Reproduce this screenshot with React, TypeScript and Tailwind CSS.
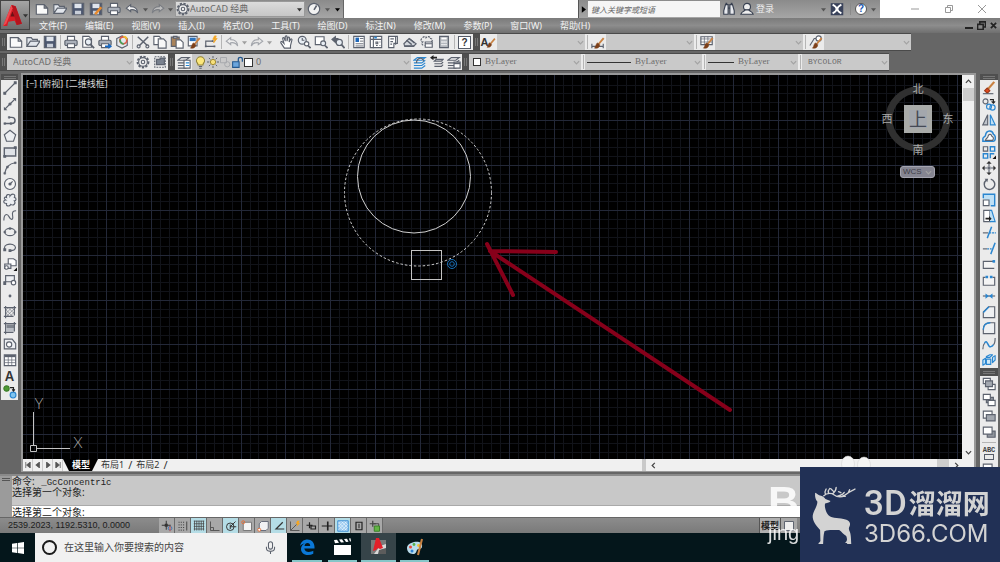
import React from 'react';

interface Tool {
  label: string;
  icon: React.ReactNode;
}

const INK = '#5c626e';
const BLUE = '#2a86d0';

const Icon = ({ children, className = 'size-[14px]' }: { children: React.ReactNode; className?: string }) => (
  <svg viewBox="0 0 16 16" className={`shrink-0 ${className}`} fill="none" stroke={INK} strokeWidth="1.3">
    {children}
  </svg>
);

/* ---------- shared glyphs ---------- */

const newFile = <path d="M1.500 3h9l4 4v7h-13zM10.500 3v4h4" fill="#fafafa" />;
const openFile = <path d="M1 13V3h5l1.500 2H13v2M1 13l4-6h11l-4 6z" fill="#e2e6ec" />;
const saveFile = (
  <>
    <path d="M1.500 1.500h13v13h-13z" fill="#4d5870" />
    <path d="M4 2h8v5H4z" fill="#dfe4ec" stroke="none" />
    <path d="M4.500 10h7v4h-7z" fill="#c8ced8" stroke="none" />
  </>
);
const printer = (
  <>
    <path d="M4 6V1.500h8V6" fill="#fff" />
    <rect x="1" y="6" width="14" height="6" rx="1.500" fill="#aab0ba" />
    <path d="M4 10h8v4.500H4z" fill="#fff" />
  </>
);
const undo = <path d="M6.500 3 1.500 7l5 4V8.800c4-.5 6.500.7 8 3.700 0-4.500-3-7.200-8-7.200z" fill="#f2f2f2" />;
const redo = <path d="m9.500 3 5 4-5 4V8.800c-4-.5-6.500.7-8 3.700 0-4.500 3-7.200 8-7.200z" fill="#e4e4e4" />;
const gear = (
  <>
    <circle cx="8" cy="8" r="6.300" strokeDasharray="2.600 1.600" strokeWidth="2" />
    <circle cx="8" cy="8" r="5" fill="#eee" />
    <circle cx="8" cy="8" r="2" />
  </>
);
const brush = (
  <>
    <path d="m9 10 5.500-6.500" stroke="#c98242" strokeWidth="2.200" />
    <path d="M4 15c3 .5 6-.5 6-4L8 9c-2.500 0-2 4-4 6z" fill="#7d4019" stroke="#7d4019" strokeWidth=".6" />
  </>
);
const layers = <path d="m1 6 4-3h9l-4 3zM1 9h9l4-3M1 12h9l4-3M1 15h9l4-3" fill="#f4f4f4" />;

/* ---------- toolbars ---------- */

const standardTools: Tool[][] = [
  [
    { label: '新建', icon: newFile },
    { label: '打开', icon: openFile },
    { label: '保存', icon: saveFile },
  ],
  [
    { label: '打印', icon: printer },
    { label: '打印预览', icon: <><path d="M2 1.500h7l3 3V14H2z" fill="#fff" /><circle cx="8.500" cy="8" r="3.500" fill="#e8eef5" /><path d="m11 11 4 4" strokeWidth="2" /></> },
    { label: '发布', icon: <>{printer}<path d="M8 12h4V9.500l4 3.500-4 3v-2H8z" fill="#1668c4" stroke="none" /></> },
    { label: '三维打印', icon: <><path d="m8 1 6 3v8l-6 3-6-3V4z" fill="#e3e8ee" /><circle cx="9.500" cy="6" r="4" stroke="#dd5b49" strokeWidth="2" /><path d="M6 5a4 4 0 0 0 4 5" stroke="#42a35a" strokeWidth="2" /><path d="M9.500 2a4 4 0 0 1 4 3" stroke="#f0c030" strokeWidth="2" /></> },
  ],
  [
    { label: '剪切', icon: <><path d="m2 2 11 10M14 2 4 12" strokeWidth="1.700" /><circle cx="3" cy="13" r="1.700" /><circle cx="13" cy="13" r="1.700" /></> },
    { label: '复制', icon: <><path d="M1 1.500h6l2 2V11H1z" fill="#fff" /><path d="M6 4.500h6l3 3V15H6z" fill="#f7f7f7" /></> },
    { label: '粘贴', icon: <><path d="M1.500 2.500h9V13h-9z" fill="#a9835a" /><path d="M4 1.500h4v2H4z" fill="#ddd" /><path d="M7 5.500h5l3 3V15H7z" fill="#fff" /></> },
    { label: '特性匹配', icon: <><path d="M1.500 1.500h10v11h-10z" fill="#fff" /><path d="M3 3h7v4H3z" fill="#2c72bc" stroke="none" />{brush}</> },
    { label: '块编辑器', icon: <><path d="M2 13V7h8M2 13h10" /><path d="M1 12h2v2H1zM9 6h2v2H9zM11 12h2v2h-2z" fill={INK} stroke="none" /><path d="m12 1-2 4h2l-1 4 4-5h-2l1-3z" fill="#f5a623" stroke="#f5a623" strokeWidth=".8" /></> },
  ],
];

const viewTools: Tool[][] = [
  [
    { label: '平移', icon: <path d="M5 15 1 9c-.5-1.500 1-2 2-1l1.500 1.500L3 4c0-1 1.500-1.500 2 0l1 3V2c0-1.300 2-1.300 2 0v5l1-4c.3-1 2-.8 1.800.4L10.500 8l1.500-3c.5-1 2-.4 1.600.8L12 12v3z" fill="#fff" /> },
    { label: '实时缩放', icon: <><circle cx="6" cy="6" r="4.500" fill="#e8eef4" /><path d="M6 3.500V6h2.500" /><circle cx="11" cy="10" r="2.500" fill="#fff" /><path d="m12.500 12 3 3" strokeWidth="2" /></> },
    { label: '窗口缩放', icon: <><path d="M1.500 2h10v9h-10z" fill="#fff" /><circle cx="10.500" cy="9.500" r="2.800" fill="#e8eef4" /><path d="m12.500 12 3 3" strokeWidth="2" /></> },
    { label: '缩放上一个', icon: <><path d="M1 5 5 2v2h3v3H5v1.500z" fill={INK} /><circle cx="9.500" cy="8.500" r="3.500" fill="#e8eef4" /><path d="m12 11 3.500 4" strokeWidth="2" /></> },
  ],
  [
    { label: '特性', icon: <><path d="M2 1.500h12v13H2z" fill="#fff" /><path d="M4 3h4v5H4z" fill="#1f67b8" stroke="none" /><path d="M9 4h4M9 7h4M4 10h9M4 12.500h9" strokeWidth="1" /></> },
    { label: '设计中心', icon: <><path d="M1.500 1.500h13v13h-13z" fill="#fff" /><path d="M5 2v13M2 5h12M8 8h2v2H8zM12 8h1M8 12h2M12 12h1" /><path d="M6 2h3v2H6z" fill={BLUE} stroke="none" /></> },
    { label: '工具选项板', icon: <><path d="M3 1.500h10v8H9v5H3z" fill="#fff" /><path d="M11 2v9M5 4.500h4M5 7.500h3M5 10.500h2" /></> },
    { label: '图纸集', icon: <><path d="m1 10 6-6 8 6-3 3H2z" fill="#d5d9de" /><path d="m4 6 6 5M7 4l6 5M2 12.500h11" strokeWidth="1.500" /></> },
    { label: '标记集', icon: <><path d="M3 3c2-2 4-1 4 0 2-2 5-1 5 1 2 0 3 2 1 4M2 4c-2 2 0 4 1 4-2 2 0 4 2 4" strokeDasharray="2.500 1" /><path d="M6 8h8v6H6zM6 10h8" fill="#fff" /></> },
    { label: '计算器', icon: <><path d="M3 1.500h10v13H3z" fill="#b4b8be" /><path d="M5 4h6" stroke="#fff" strokeWidth="2" /><path d="M5 8h6M5 11h6" stroke="#fff" strokeDasharray="1.500 .8" strokeWidth="1.600" /></> },
  ],
];

const drawTools: Tool[] = [
  { label: '直线', icon: <><path d="M2 14 14 2" /><path d="M1 13h2v2H1zM13 1h2v2h-2z" fill={INK} /></> },
  { label: '构造线', icon: <><path d="M2 14 14 2" /><path d="M1 11v4h4zM11 1h4v4z" fill={INK} stroke="none" /><circle cx="8" cy="8" r="1.200" fill={INK} /></> },
  { label: '多段线', icon: <><path d="M2 12h8c5 0 5-7 0-7H8" strokeWidth="1.700" /><path d="M1 11h2v2H1zM8 11h2v2H8zM6 4h2v2H6z" fill={INK} strokeWidth=".5" /></> },
  { label: '多边形', icon: <path d="m8 1.500 6.500 5L12 14H4L1.500 6.500z" fill="#eceef1" /> },
  { label: '矩形', icon: <><path d="M1.500 3.500h13v9h-13z" fill="#dfe2e7" strokeWidth="1.600" /><path d="M13 2h2v2h-2zM1 12h2v2H1z" fill={INK} /></> },
  { label: '圆弧', icon: <><path d="M2 14C3 8 7 3 14 2" /><path d="M1 13h2v2H1zM4 6h2v2H4zM13 1h2v2h-2z" fill={INK} strokeWidth=".6" /></> },
  { label: '圆', icon: <><circle cx="8" cy="8" r="6.300" fill="#f3f3f3" /><path d="m8 8 3-3" /><circle cx="8" cy="8" r="1.200" fill={INK} /></> },
  { label: '修订云线', icon: <path d="M4 5c-1-4 4-4 4-1.500C10 0 15 1 13 5c3 1 2 4 0 4 2 3-1 6-4 4-2 3-6 2-5-1-4 0-4-4-1-4-3-2-1-4 1-3z" fill="#eceef1" /> },
  { label: '样条曲线', icon: <path d="M1 13C1 5 5 5 7 9s5 4 4-1 1-6 4-6" /> },
  { label: '椭圆', icon: <><ellipse cx="8" cy="8" rx="6" ry="4.200" fill="#eee" /><path d="M1 7h2v2H1zM7 3h2v2H7zM13 7h2v2h-2z" fill={INK} strokeWidth=".5" /></> },
  { label: '椭圆弧', icon: <><path d="M2 10C0 4 7 3 11 4c5 2 4 7-2 7" /><path d="M1 9h2v2H1zM7 10h2v2H7z" fill={INK} /></> },
  { label: '插入块', icon: <><path d="M6 2h6l3 2v6H6z" fill="#fff" /><path d="M2 8h7v5H2z" fill="#dfe2e7" /><circle cx="4" cy="12" r="2" fill="#fff" /><path d="m16 12v4h-4z" fill="#111" stroke="none" /></> },
  { label: '创建块', icon: <><path d="M3 3h10v7H3z" fill="#eceef1" /><circle cx="12" cy="11" r="2.500" fill="#fff" /><path d="M1 10h2v3H1z" fill={INK} /></> },
  { label: '点', icon: <circle cx="8" cy="8" r="1" fill={INK} /> },
  { label: '图案填充', icon: <><path d="M3 1v14M1 3h14M13 1v11M1 13h11" /><path d="M3 6l3-3M3 10l7-7M4 13l9-9M8 13l5-5M3 9l4 4M3 5l8 8M6 3l7 7M10 3l3 3" strokeWidth=".6" /></> },
  { label: '渐变色', icon: <><path d="M4 4h9v4H4z" fill="#80858e" stroke="none" /><path d="M4 8h9v4H4z" fill="#b9bdc4" stroke="none" /><path d="M3 1v14M1 3h14M13 1v11M1 13h11" /></> },
  { label: '面域', icon: <><path d="M1.500 2.500h9l4 5v6h-13z" fill="#eceef1" /><circle cx="7" cy="8.500" r="3" fill="#fff" /></> },
  { label: '表格', icon: <><path d="M1.500 2h13v12.500h-13z" fill="#fff" /><path d="M2 3.500h12" strokeWidth="2.500" /><path d="M2 8h12M2 11h12M6 4v10M10 4v10" strokeWidth=".8" /></> },
  { label: '多行文字', icon: null },
  { label: '添加选定对象', icon: <><circle cx="4" cy="4" r="3" fill="#4e9a34" stroke="#3c7d28" /><circle cx="11.500" cy="11.500" r="3.300" fill="#7fc4f0" stroke="#2a86d0" /><path d="M8 3h4v3M10.500 5l1.500 2 1.500-2" stroke="#222" /></> },
];

const modifyTools: Tool[] = [
  { label: '删除', icon: <><path d="m7 9 7-8" stroke="#c98242" strokeWidth="2.600" /><path d="m3 11 3-3 3 3-3 3z" fill="#e2481c" stroke="#9c3a1a" /><path d="M1 14.500h12" /></> },
  { label: '复制对象', icon: <><circle cx="4" cy="5" r="2.800" /><circle cx="8" cy="11" r="2.800" stroke={BLUE} /><circle cx="12" cy="12" r="3" stroke={BLUE} /><path d="M9 3h4v3M11 5l2 2 2-2" stroke="#222" /></> },
  { label: '镜像', icon: <><path d="M6.500 2v11.500H1z" fill="#c0c5cc" /><path d="M9.500 2v11.500H15z" fill="#bfe0f5" stroke={BLUE} /></> },
  { label: '偏移', icon: <><path d="M1 14v-3c0-2 3-2 3-4 1-6 8-6 9-1 3 1 3 8 0 8z" stroke={BLUE} strokeWidth="1.700" /><path d="M4 13c0-3 3-2 3-5 1-3 4-2 4 0 2 1 3 3 1 5z" fill="#fff" /></> },
  { label: '阵列', icon: <><path d="M1.500 2h5v5h-5z" /><path d="M9.500 2h5v5h-5zM1.500 10h5v5h-5zM9.500 15v-5H14" stroke={BLUE} strokeWidth="1.600" /><path d="m12 16 4-4v4z" fill="#111" stroke="none" /></> },
  { label: '移动', icon: <><path d="M8 1v5M8 10v5M1 8h5M10 8h5" /><path d="m8 0-3 3h6zM8 16l-3-3h6zM0 8l3-3v6zM16 8l-3-3v6z" fill="#333" stroke="none" /><path d="M7 7h2v2H7z" /></> },
  { label: '旋转', icon: <><path d="M5 3.500a6 6 0 1 0 5-1" strokeWidth="1.600" /><path d="m3 2 4 0-1 4z" fill={INK} stroke="none" /></> },
  { label: '缩放', icon: <><path d="M1.500 6V1.500h13v13H10" fill="#bfe0f5" stroke={BLUE} strokeWidth="1.600" /><path d="M1.500 8h6.500v6.500H1.500z" fill="#fff" /></> },
  { label: '拉伸', icon: <><path d="M2 14.500V1.500h7v13z" fill="#fff" /><path d="m9 1.500 2 0 4 13H9" fill="#bfe0f5" stroke={BLUE} /><path d="M4 10h4V8l3 3-3 3v-2H4z" fill="#222" stroke="none" /></> },
  { label: '修剪', icon: <><path d="M1 9h6" /><path d="M8 9h8" stroke={BLUE} strokeDasharray="2.500 1" /><path d="M6 15 11 2" stroke={BLUE} strokeWidth="1.700" /></> },
  { label: '延伸', icon: <><path d="M1 9h5" /><path d="M6 9h5" stroke={BLUE} strokeDasharray="2 1" /><path d="m10 15 5-13" stroke={BLUE} strokeWidth="1.700" /></> },
  { label: '打断于点', icon: <><path d="M14 13H1.500V5H13" fill="#f4f4f4" /><path d="M12 3.500h3v3h-3z" fill={BLUE} stroke="none" /></> },
  { label: '打断', icon: <><path d="M4 5H1.500v9h13V5H12" fill="#f4f4f4" /><path d="M4 3h3v3H4zM9 3h3v3H9z" fill={BLUE} stroke="none" /></> },
  { label: '合并', icon: <><path d="M1 8h14" /><path d="m4 5 4 3-4 3zM12 5 8 8l4 3z" fill={BLUE} stroke="none" /></> },
  { label: '倒角', icon: <><path d="M1.500 14.500V8l6-6h7v12.500z" fill="#eef0f2" /><path d="M1.500 8.500 8 2" stroke={BLUE} strokeWidth="1.600" /></> },
  { label: '圆角', icon: <><path d="M1.500 14.500V9c0-4 3-7 7-7h6v12.500z" fill="#eef0f2" /><path d="M1.500 10c0-5 3-8 8-8" stroke={BLUE} strokeWidth="1.600" /></> },
  { label: '光顺曲线', icon: <><path d="M1 14c0-5 1-6 2-7M13 9c2-2 2-5 2-8" /><path d="M3 7c3-6 4 6 7 4 1 0 2-1 3-2" stroke={BLUE} strokeWidth="1.700" /></> },
  { label: '分解', icon: <><path d="M1 8l3-2v6l-3 2zM5 4l4-2h3L9 5H5zM5 7h5v6H5zM12 5l3-2v5l-3 3z" fill="#cfe8f7" stroke={BLUE} strokeLinejoin="round" /></> },
];

const orderTools: Tool[] = [
  { label: '前置', icon: <><path d="M1.500 1.500h8v6h-8zM7 8.500h8v6H7z" fill="#fff" /><path d="M4 4.500h8v6.500H4z" fill="#a2a7af" /></> },
  { label: '后置', icon: <><path d="M5 5h8v6H5z" fill="#8f949c" /><path d="M1.500 1.500h8v6h-8zM7 8.500h8v6H7z" fill="#fff" /></> },
  { label: '置于对象之上', icon: <><path d="M1.500 2.500h10v8h-10z" fill="#fff" /><path d="M5 6.500h10v7H5z" fill="#a2a7af" /></> },
  { label: '置于对象之下', icon: <><path d="M6 7h9v7H6z" fill="#8f949c" /><path d="M1.500 2.500h10v8h-10z" fill="#fff" /></> },
];

const snapTools: (Tool & { on?: boolean })[] = [
  { label: '推断约束', icon: <><path d="M7 1v12M1 7h12" stroke="#333" /><path d="M5 5h4v4H5z" fill="#333" stroke="none" /><circle cx="12" cy="11" r="2.500" stroke="#3b78b8" /><path d="M12 8v7" stroke="#d35445" /></> },
  { label: '捕捉', icon: <><path d="M2 3h9M2 6.500h9M2 10h9M2 13.500h9" stroke="#444" strokeDasharray="1.500 1.500" /><path d="M13 2v12" stroke="#444" /></> },
  { label: '栅格', on: true, icon: <path d="M1 1.500h14M1 5h14M1 8.500h14M1 12h14M2 1v13M5 1v13M8 1v13M11 1v13M14 1v13" stroke="#444" strokeWidth="1" /> },
  { label: '正交', icon: <path d="M2 2v12h12M2 10h4v4" stroke="#555" /> },
  { label: '极轴', on: true, icon: <><circle cx="7" cy="9" r="5" stroke="#333" /><path d="m7 9 7-7M7 9h8M7 6v6" stroke="#333" /></> },
  { label: '对象捕捉', icon: <><path d="M3 3h11v11H3z" fill="#f4f4f4" stroke="#777" /><circle cx="3" cy="3" r="2" stroke="#e2703a" /></> },
  { label: '三维对象捕捉', icon: <><path d="m3 5 3-3h9v9l-3 3H3z" fill="#f1f1f4" stroke="#666b7a" /><circle cx="3" cy="13" r="2" stroke="#e2703a" fill="#fff" /></> },
  { label: '对象追踪', on: true, icon: <path d="M13 3 4 12h11" stroke="#333" strokeWidth="1.600" /> },
  { label: '动态 UCS', icon: <><path d="M2 2v12h12M2 14l8-8" stroke="#555" /><path d="m11 1-2 4h2l-1 4 5-5h-2l1-3z" fill="#f5a623" stroke="none" /></> },
  { label: '动态输入', icon: <path d="M6 3v8M2 7h8M8 8h6v4H8z" stroke="#222" strokeWidth="1.600" /> },
  { label: '线宽', icon: <><path d="M9 2v12" stroke="#222" strokeWidth="2.200" /><path d="M1 8h14" stroke="#222" strokeWidth="1.400" /></> },
  { label: '透明度', on: true, icon: <><path d="M1 1h14v14H1z" fill="#9ccbf0" stroke="#4493d6" /><path d="M2 5l3-3M2 9l7-7M2 13l11-11M6 14l8-8M10 14l4-4M2 7l7 7M2 3l11 11M6 2l8 8M10 2l4 4" stroke="#fff" strokeWidth=".7" /></> },
  { label: '快捷特性', icon: <><path d="M4 3h8v10H4z" stroke="#222" strokeWidth="1.600" /><path d="M8 5v6" stroke="#222" /></> },
  { label: '选择循环', icon: <><path d="M5 1v8M1 5h8" stroke="#444" strokeWidth="1.600" /><path d="M6 5h7v7" stroke="#444" /><path d="M7 8h7v7H7z" fill="#62b544" stroke="#3a7f27" /></> },
];

const menus = ['文件(F)', '编辑(E)', '视图(V)', '插入(I)', '格式(O)', '工具(T)', '绘图(D)', '标注(N)', '修改(M)', '参数(P)', '窗口(W)', '帮助(H)'];

/* ---------- small building blocks ---------- */

const ToolButton = ({ tool }: { tool: Tool }) => (
  <button aria-label={tool.label} className="flex h-4 w-[17px] shrink-0 items-center justify-center hover:bg-sky-200">
    {tool.icon ? <Icon>{tool.icon}</Icon> : <span className="font-['Inter'] text-[13px] leading-4 font-semibold text-[#333]">A</span>}
  </button>
);

const Separator = () => (
  <span className="flex h-full w-1 shrink-0 justify-center py-px">
    <span className="w-px bg-[#b5b5b5]" />
  </span>
);

const Grip = () => (
  <span className="flex w-[7px] shrink-0 items-center justify-center gap-px self-stretch bg-[#4f4f4f] py-1">
    <span className="h-full w-px bg-[#777]" />
    <span className="h-full w-px bg-[#777]" />
  </span>
);

const Caret = ({ className = 'text-[#555]' }: { className?: string }) => (
  <svg viewBox="0 0 8 6" className={`h-[5px] w-[5px] shrink-0 ${className}`} fill="currentColor">
    <path d="M0 1h8L4 6z" />
  </svg>
);

const Chevron = ({ rotate = '', className = 'text-[#a3a3a3]' }: { rotate?: string; className?: string }) => (
  <svg viewBox="0 0 8 8" className={`size-[7px] shrink-0 ${rotate} ${className}`} fill="none" stroke="currentColor" strokeWidth="1.400">
    <path d="m1 2.500 3 3 3-3" />
  </svg>
);

interface ComboProps {
  label: string;
  value: string;
  width: string;
  font?: string;
  before?: React.ReactNode;
}

const Combo = ({ label, value, width, font = 'text-[9px]', before }: ComboProps) => (
  <label className={`flex h-full shrink-0 items-center bg-[#c9c9c9] pr-px ${width}`}>
    {before}
    <select aria-label={label} className={`h-full min-w-0 flex-1 appearance-none bg-transparent text-[#6b6b6b] outline-none ${font}`}>
      <option>{value}</option>
    </select>
    <Chevron />
  </label>
);

const mono = "font-['Liberation_Mono',monospace] text-[8px]";
const serif = "font-['Liberation_Serif',serif] text-[9px]";

/* ---------- sections ---------- */

const TitleBar = () => (
  <div className="flex h-[18px] bg-white">
    <div className="flex w-[313px] shrink-0 items-center bg-gradient-to-b from-[#8b8b8b] to-[#a6a6a6] pl-[3px]">
      {[newFile, openFile, saveFile, <>{saveFile}<path d="m7 14 7-8" stroke="#e88b2e" strokeWidth="3" /></>, printer, undo].map((icon, i) => (
        <button key={i} aria-label={['新建', '打开', '保存', '另存为', '打印', '放弃'][i]} className="flex w-[18px] justify-center">
          <Icon>{icon}</Icon>
        </button>
      ))}
      <button aria-label="放弃列表" className="flex w-2 justify-center"><Caret /></button>
      <button aria-label="重做" className="flex w-[17px] justify-center opacity-50"><Icon>{redo}</Icon></button>
      <button aria-label="重做列表" className="flex w-[9px] justify-center"><Caret /></button>
      <label className="flex h-4 w-[130px] items-center border border-[#999] bg-gradient-to-b from-[#dcdcdc] to-[#c6c6c6] pr-[2px]">
        <Icon>{gear}</Icon>
        <select aria-label="工作空间" className="min-w-0 flex-1 appearance-none text-[9px] text-[#686868] outline-none">
          <option>AutoCAD 经典</option>
        </select>
        <Caret className="text-[#333]" />
      </label>
      <button aria-label="性能" className="flex w-[18px] justify-center">
        <Icon><circle cx="8" cy="8" r="6.500" fill="#f2f2f2" /><path d="m8 9 3-5" strokeWidth="1.800" /></Icon>
      </button>
      <button aria-label="性能列表" className="flex w-2 justify-center"><Caret /></button>
      <button aria-label="自定义快速访问工具栏" className="flex flex-1 items-center justify-center"><Caret className="text-black" /></button>
    </div>

    <div className="flex-1 border-l border-[#666]" />

    <div className="flex w-[302px] shrink-0 items-center bg-gradient-to-b from-[#8b8b8b] to-[#a6a6a6]">
      <button aria-label="展开搜索" className="flex h-full w-[10px] items-center justify-center border-l border-[#555]">
        <svg viewBox="0 0 6 8" className="h-[7px] w-[5px]"><path d="M1 0v8l5-4z" /></svg>
      </button>
      <input
        aria-label="信息中心搜索"
        placeholder="键入关键字或短语"
        className="h-4 w-[132px] bg-[#f5f5f5] pl-[3px] text-[8px] italic outline-none placeholder:text-[#666]"
      />
      <button aria-label="搜索" className="flex w-[18px] justify-center">
        <Icon><path d="M2 14v-4l2-7h3v11zM9 14V3h3l2 7v4z" fill="#e7e9ee" stroke="#384050" /><path d="M7 7h2M4 1.500h2M10 1.500h2" stroke="#384050" /></Icon>
      </button>
      <button className="flex w-[88px] items-center gap-[2px] pl-[2px] text-[9px] text-[#eee]">
        <Icon><circle cx="8" cy="5.500" r="4" fill="#eee" stroke="#384050" /><path d="M1 14c1-4 4-3 5-5h4c1 2 4 1 5 5z" fill="#eee" stroke="#384050" /></Icon>
        登录
        <span className="ml-auto"><Caret /></span>
      </button>
      <button aria-label="Exchange" className="ml-[2px] flex w-[18px] justify-center">
        <Icon><path d="M1.500 2h13v12.500h-13z" fill="#38415a" stroke="#38415a" /><path d="M3 3c6 3 6 7 0 10M13 3c-6 3-6 7 0 10" stroke="#fff" strokeWidth="2" /></Icon>
      </button>
      <span className="mx-1 h-3 w-px bg-[#8a8a8a]" />
      <button aria-label="帮助" className="flex size-[12px] items-center justify-center rounded-full border border-[#555] bg-white font-['Liberation_Sans',sans-serif] text-[10px] leading-none font-bold text-[#1d56b0]">?</button>
      <button aria-label="帮助列表" className="flex flex-1 justify-center"><Caret /></button>
    </div>

    <div className="flex w-[120px] shrink-0 items-center justify-between pr-[14px] pl-[31px] text-[#999]">
      <button aria-label="最小化"><svg viewBox="0 0 8 8" className="size-2" stroke="currentColor"><path d="M0 4h8" /></svg></button>
      <button aria-label="还原"><svg viewBox="0 0 8 8" className="size-2" fill="none" stroke="currentColor"><path d="M.5 2.500h5v5h-5zM2.500 2V.5h5v5H6" /></svg></button>
      <button aria-label="关闭"><svg viewBox="0 0 8 8" className="size-2" stroke="currentColor"><path d="m0 0 8 8M8 0 0 8" /></svg></button>
    </div>
  </div>
);

const MenuBar = () => (
  <nav className="flex h-[15px] items-center bg-gradient-to-b from-[#7b7b7b] via-[#8d8d8d] to-[#6f6f6f]">
    <div className="flex flex-1 gap-[18px] pl-[9px] text-[9px] leading-[15px] text-[#f2f2f2]">
      {menus.map(m => <button key={m}>{m}</button>)}
    </div>
    <div className="flex items-center gap-1 pr-[3px] text-[#222]">
      <button aria-label="最小化图形"><svg viewBox="0 0 8 8" className="size-2" stroke="currentColor" strokeWidth="2"><path d="M0 6h8" /></svg></button>
      <button aria-label="还原图形"><svg viewBox="0 0 8 8" className="size-[9px]" fill="none" stroke="currentColor"><path d="M.5 3h5v4.500h-5zM2.500 3V.8h5v4.500H6" strokeWidth="1.400" /></svg></button>
      <button aria-label="关闭图形"><svg viewBox="0 0 8 8" className="size-[7px]" stroke="currentColor" strokeWidth="2"><path d="m1 1 6 6M7 1 1 7" /></svg></button>
    </div>
  </nav>
);

const Header = () => (
  <header className="flex shrink-0 bg-[#6d6d6d]">
    <button aria-label="应用程序菜单" className="flex h-[30px] w-[30px] shrink-0 items-center justify-center border border-[#444] bg-gradient-to-b from-[#a5a5a5] to-[#6d6d6d]">
      <svg viewBox="0 0 20 24" className="h-[25px] w-[21px]">
        <path d="M1 22 9 2l4 1 6 17-5 1-2-4-6 1-1 4z" fill="#d81c25" />
        <path d="m9 2 4 1 6 17-5 1z" fill="#b5141e" />
        <path d="m8 13 2-5 2 5z" fill="#6d1116" />
        <path d="m1 22 8-20 1 3-6 15z" fill="#ef4a50" />
      </svg>
      <Caret className="text-[#333]" />
    </button>
    <div className="min-w-0 flex-1">
      <TitleBar />
      <MenuBar />
    </div>
  </header>
);

const ToolGroups = ({ groups }: { groups: Tool[][] }) => (
  <>
    {groups.map((group, i) => (
      <React.Fragment key={i}>
        {group.map(t => <ToolButton key={t.label} tool={t} />)}
        <Separator />
      </React.Fragment>
    ))}
  </>
);

const StandardToolbar = () => (
  <div className="flex h-[18px] w-fit items-center border-y border-[#4a4a4a] bg-[#ebebeb]">
    <Grip />
    <ToolGroups groups={standardTools} />
    <div className="flex items-center opacity-50">
      <ToolButton tool={{ label: '放弃', icon: undo }} />
      <button aria-label="放弃列表" className="flex w-2 justify-center"><Caret /></button>
      <ToolButton tool={{ label: '重做', icon: redo }} />
      <button aria-label="重做列表" className="mr-1 flex w-[9px] justify-center"><Caret /></button>
    </div>
    <ToolGroups groups={viewTools} />
    <button aria-label="帮助" className="flex w-[17px] justify-center">
      <span className="size-[13px] border border-[#565c68] bg-white font-['Liberation_Sans',sans-serif] text-[10px] leading-[11px] font-bold text-[#333]">?</span>
    </button>
    <Grip />
    <button aria-label="文字样式" className="flex w-[17px] shrink-0 items-center justify-center font-['Liberation_Sans',sans-serif] text-[11px] leading-4 font-bold text-[#333]">
      A<Icon className="-ml-1 size-[12px]">{brush}</Icon>
    </button>
    <Combo label="文字样式" value="" width="w-[88px]" />
    <Separator />
    <ToolButton tool={{ label: '标注样式', icon: <><path d="M1 10v5M14 10v5M1 13h13" />{brush}</> }} />
    <Combo label="标注样式" value="" width="w-[88px]" />
    <Separator />
    <ToolButton tool={{ label: '表格样式', icon: <><path d="M1 2h13v9H1z" fill="#fff" /><path d="M1 4.500h13M1 8h13M5 2v9M9 2v9" strokeWidth=".8" />{brush}</> }} />
    <Combo label="表格样式" value="" width="w-[88px]" />
    <Separator />
    <ToolButton tool={{ label: '多重引线样式', icon: <><path d="m1 12 5-8h4" /><circle cx="11" cy="4" r="3" fill="#fff" />{brush}</> }} />
    <Combo label="多重引线样式" value="" width="w-[87px]" />
  </div>
);

const PropertiesToolbar = () => (
  <div className="flex h-[18px] w-fit items-center border-y border-[#4a4a4a] bg-[#ebebeb]">
    <Grip />
    <Combo label="工作空间" value="AutoCAD 经典" width="w-[127px]" before={<span className="w-[6px]" />} />
    <ToolButton tool={{ label: '工作空间设置', icon: gear }} />
    <ToolButton tool={{ label: '我的工作空间', icon: <><path d="M2 2h12v12H2z" strokeDasharray="2 1.200" /><path d="M4 5h4V3.500h5V11H4z" fill="#79818e" /></> }} />
    <Grip />
    <ToolButton tool={{ label: '图层特性管理器', icon: <>{layers}<path d="M8 6h7v9H8z" fill="#fff" /><path d="M10 9h4M10 12h4" stroke={BLUE} /></> }} />
    <Combo
      label="图层"
      value="0"
      width="w-[219px]"
      before={
        <span className="flex items-center pl-[2px] pr-[3px]">
          <Icon className="size-[13px]"><path d="M5 11c0-2-2-3-2-5a5 5 0 0 1 10 0c0 2-2 3-2 5z" fill="#fbe77c" stroke="#8f8035" /><path d="M6 13h4M6.500 15h3" /></Icon>
          <Icon className="size-[12px]"><circle cx="8" cy="8" r="3.500" fill="#f6e07c" stroke="#a08a2e" /><path d="M8 0v3M8 13v3M0 8h3M13 8h3M2.500 2.500l2 2M11.500 11.500l2 2M13.500 2.500l-2 2M4.500 11.500l-2 2" /></Icon>
          <Icon className="size-[12px] opacity-30"><path d="M2 2h8v7H2z" /><circle cx="11" cy="11" r="3.500" /></Icon>
          <Icon className="size-[13px]"><path d="M2 7h8v7H2z" fill="#6ba5dc" stroke="#24588e" /><path d="M9 7V4c0-3 5-3 5 0v3" stroke="#24588e" strokeWidth="1.600" /></Icon>
          <span className="size-[9px] border border-[#333] bg-white" />
        </span>
      }
    />
    <ToolButton tool={{ label: '置为当前图层', icon: <><g stroke={BLUE}>{layers}</g><path d="M4 9c0-5 7-8 8-2" /></> }} />
    <ToolButton tool={{ label: '上一个图层', icon: <><path d="m5 7 2-2h8l-2 2zM5 10h8l2-2M5 13h8l2-2" /><path d="m0 3 4-3v2h4v2H4v2z" fill="#222" stroke="none" /></> }} />
    <ToolButton tool={{ label: '图层状态管理器', icon: <>{layers}<path d="M8 8h7v7H8z" fill="#fff" /><path d="M8 9.500h7" strokeWidth="2" /></> }} />
    <Grip />
    <Combo label="颜色" value="ByLayer" width="w-[112px]" font={serif} before={<span className="mx-1 size-[8px] border border-[#333] bg-white" />} />
    <Separator />
    <Combo label="线型" value="ByLayer" width="w-[117px]" font={serif} before={<span className="mr-1 ml-[2px] h-px w-[44px] bg-[#333]" />} />
    <Separator />
    <Combo label="线宽" value="ByLayer" width="w-[92px]" font={serif} before={<span className="mr-1 ml-[2px] h-px w-[26px] bg-[#333]" />} />
    <Separator />
    <Combo label="打印样式" value="BYCOLOR" width="w-[87px]" font={mono} before={<span className="w-[6px]" />} />
  </div>
);

const SideGrip = () => (
  <div className="flex h-[6px] shrink-0 flex-col items-center justify-center gap-px bg-[#4f4f4f]">
    <span className="h-px w-3 bg-[#777]" />
    <span className="h-px w-3 bg-[#777]" />
  </div>
);

const DrawToolbar = () => (
  <aside className="mt-[2px] ml-px flex w-[17px] shrink-0 flex-col self-start bg-[#ebebeb]">
    <SideGrip />
    {drawTools.map(t => <ToolButton key={t.label} tool={t} />)}
  </aside>
);

const ModifyToolbar = () => (
  <aside className="mt-[2px] mr-[2px] flex w-[18px] shrink-0 flex-col overflow-hidden bg-[#ebebeb]">
    <SideGrip />
    {modifyTools.map(t => <ToolButton key={t.label} tool={t} />)}
    <div className="shrink-0 bg-[#4f4f4f] py-px"><SideGrip /></div>
    {orderTools.map(t => <ToolButton key={t.label} tool={t} />)}
    <span className="mx-[2px] my-[2px] h-px shrink-0 bg-[#b5b5b5]" />
    <button aria-label="文字前置" className="h-4 shrink-0 text-center font-['Liberation_Mono',monospace] text-[7px] leading-[8px] font-bold text-[#444]">
      ABC
      <span className="mx-auto block h-[6px] w-[10px] border border-[#565c68]" />
    </button>
    <ToolButton tool={{ label: '图案填充后置', icon: orderTools[2].icon }} />
  </aside>
);

const CELL = 8.96;

const Grid = () => {
  const lines = Array.from({ length: 220 }, (_, i) => i);
  return (
    <g shapeRendering="crispEdges">
      {[false, true].map(major =>
        lines.filter(i => (i % 5 === 4) === major).map(i => {
          const x = Math.round(2.5 + i * CELL);
          const y = Math.round(9.500 + i * CELL);
          return (
            <g key={i} fill={major ? '#232838' : '#111319'}>
              <rect x={x} y="0" width="1" height="100%" />
              <rect x="0" y={y} width="100%" height="1" />
            </g>
          );
        })
      )}
    </g>
  );
};

const ViewCube = () => (
  <div className="absolute top-2 right-2 flex w-[73px] flex-col items-center">
    <svg viewBox="0 0 73 74" className="h-[74px] w-[73px] overflow-visible" fontSize="11" textAnchor="middle" fill="#a9a9a9">
      <circle cx="37" cy="36" r="29" fill="none" stroke="#303030" strokeWidth="7" />
      <rect x="23" y="22" width="28" height="28" fill="#a9aba9" />
      <rect x="28" y="27" width="18" height="18" fill="#a3a7ad" />
      <text x="37" y="43" fontSize="18" fill="#454a55">上</text>
      <text x="37" y="10">北</text>
      <text x="37" y="71">南</text>
      <text x="6" y="40">西</text>
      <text x="67" y="40">东</text>
    </svg>
    <button className="mt-[9px] flex h-3 w-[35px] items-center justify-between rounded-[3px] border border-[#a5a5b0] bg-[#858591] px-[2px] font-['Liberation_Sans',sans-serif] text-[8px] leading-none text-[#3e3e48]">
      WCS<Chevron />
    </button>
  </div>
);

const Canvas = () => (
  <div className="relative min-h-0 flex-1 overflow-hidden bg-black">
    <svg className="size-full" fill="none">
      <Grid />
      <circle cx="391" cy="101.500" r="56.500" stroke="#d0d0d0" />
      <circle cx="395" cy="117.500" r="73.500" stroke="#d0d0d0" strokeDasharray="2.500 2" />
      <rect x="388.500" y="175.500" width="30" height="29" stroke="#c4c4c4" />
      <g stroke="#1870ba">
        <circle cx="429" cy="189" r="4.500" />
        <circle cx="429" cy="189" r="2.300" />
      </g>
      <path d="m464 169 26 51M467 176l66 1M467 176l240 159" stroke="#87001a" strokeWidth="4" strokeLinecap="round" />
    </svg>
    <p className="absolute top-[3px] left-[3px] text-[9px] leading-3 text-[#d6d6d6]">[−] [俯视] [二维线框]</p>
    <svg className="absolute bottom-0 left-0 h-[64px] w-[66px] font-light" fill="none" stroke="#c4c4c4">
      <path d="M10.500 50V17M14 53.500h33M7.500 50.500h6v6h-6z" />
      <g fill="#a8a8a8" stroke="none" fontFamily="Lato" fontSize="15" textAnchor="middle">
        <text x="16" y="14">Y</text>
        <text x="55" y="53">X</text>
      </g>
    </svg>
    <ViewCube />
  </div>
);

const LayoutTabs = () => (
  <div className="flex h-3 shrink-0 items-center bg-[#f0f0f0] text-[9px] leading-3 text-[#333]">
    {['M1 0v8M7 0v8L2 4z', 'M6 0v8L1 4z', 'M2 0v8l5-4z', 'M7 0v8M1 0v8l5-4z'].map((d, i) => (
      <button key={d} aria-label={['第一个', '上一个', '下一个', '最后一个'][i]} className="flex h-full w-[10px] items-center justify-center border-r border-[#ccc]">
        <svg viewBox="0 0 8 8" className="size-[6px]" fill="#555" stroke="#555"><path d={d} /></svg>
      </button>
    ))}
    <button className="h-full bg-black pr-2 pl-[9px] font-bold text-white [clip-path:polygon(0_0,100%_0,calc(100%_-_6px)_100%,6px_100%)]">模型</button>
    <button className="pl-[3px]">布局1</button>
    <span className="px-1 text-[11px]">/</span>
    <button>布局2</button>
    <span className="px-1 text-[11px]">/</span>
    <div className="ml-auto flex h-full w-[332px] items-center">
      <span className="mr-1 h-full w-1 bg-[#c9c9c9]" />
      <Chevron rotate="rotate-90" className="text-[#444]" />
      <span className="ml-auto h-full w-3 bg-[#cdcdcd]" />
      <span className="mr-[14px] ml-1 flex"><Chevron rotate="-rotate-90" className="text-[#444]" /></span>
    </div>
  </div>
);

const DrawingWindow = () => (
  <section className="mt-px mr-1 ml-[3px] flex min-w-0 flex-1 flex-col border-2 border-b border-[#999]">
    <div className="flex min-h-0 flex-1">
      <Canvas />
      <div className="flex w-3 shrink-0 flex-col items-center bg-[#f0f0f0] py-[3px]">
        <Chevron rotate="rotate-180" className="text-[#444]" />
        <span className="mt-[3px] h-[13px] w-[11px] bg-[#cdcdcd]" />
        <span className="mt-auto"><Chevron className="text-[#444]" /></span>
      </div>
    </div>
    <LayoutTabs />
  </section>
);

const CommandLine = () => (
  <section className="flex h-[43px] shrink-0 border-t-2 border-[#8a8a8a] bg-[#9b9b9b] text-[10px] text-[#222]">
    <div className="flex w-3 flex-col items-center gap-px pt-[2px]">
      <span className="h-px w-2 bg-[#555]" />
      <span className="h-px w-2 bg-[#555]" />
    </div>
    <div className="flex flex-1 flex-col bg-[#c8c8c8]">
      <p className="h-[11px] leading-[10px]">命令: <span className="ml-1 font-['Liberation_Mono',monospace] text-[9px]">_GcConcentric</span></p>
      <p className="h-[11px] leading-[11px]">选择第一个对象:</p>
      <input aria-label="命令行" defaultValue="选择第二个对象:" className="mt-auto h-[12px] w-full border-t border-[#aaa] bg-white leading-[11px] outline-none" />
    </div>
  </section>
);

const StatusBar = () => (
  <div className="flex h-4 shrink-0 items-center border-t border-[#666] bg-gradient-to-b from-[#8c8c8c] to-[#7a7a7a]">
    <output className="w-[159px] pl-2 font-['Liberation_Sans',sans-serif] text-[9px] leading-none whitespace-nowrap text-[#1c1c1c]">2539.2023, 1192.5310, 0.0000</output>
    {snapTools.map(t => (
      <button
        key={t.label}
        aria-label={t.label}
        aria-pressed={!!t.on}
        className={`flex h-full w-4 shrink-0 items-center justify-center border-r border-[#6b6b6b] ${t.on ? 'bg-[#b5dde6]' : 'bg-[#a8a8a8]'}`}
      >
        <Icon className="size-[12px]">{t.icon}</Icon>
      </button>
    ))}
    <div className="ml-auto flex h-full w-[241px] items-center">
      <button className="h-full w-[22px] border-x border-[#555] bg-[#b0b0b0] text-[9px] leading-none font-bold text-[#222]">模型</button>
      <button aria-label="布局" className="flex h-full w-4 items-center justify-center bg-[#a8a8a8]"><Icon className="size-[12px]"><path d="M2 2h12v12H2z" fill="#eee" /></Icon></button>
    </div>
  </div>
);

const TaskBar = () => (
  <footer className="flex h-[29px] shrink-0 bg-[#04161b]">
    <button aria-label="开始" className="flex w-[35px] items-center justify-center">
      <svg viewBox="0 0 12 12" className="size-3" fill="#fff"><path d="m0 1.700 5-.7v4.700H0zM5.700.9 12 0v5.700H5.700zM0 6.300h5V11l-5-.7zM5.700 6.300H12V12l-6.300-.9z" /></svg>
    </button>
    <label className="flex w-[252px] items-center bg-[#f1f1f1] pr-[10px] pl-[7px]">
      <span className="size-[15px] rounded-full border-2 border-[#1a1a1a]" />
      <input aria-label="搜索" placeholder="在这里输入你要搜索的内容" className="ml-[7px] min-w-0 flex-1 text-[10px] outline-none placeholder:text-[#444]" />
      <Icon className="size-[13px]"><rect x="5.500" y="1" width="5" height="9" rx="2.500" /><path d="M3 7v2c0 5 10 5 10 0V7M8 13v3" /></Icon>
    </label>
    <button aria-label="Edge" className="ml-[5px] flex w-[30px] items-center justify-center border-b-2 border-[#86c6c8]">
      <svg viewBox="0 0 16 16" className="mt-px size-4"><path d="M1 7C2 2.500 5 .5 8.500.5c4 0 7 3 7 7.500v1.500H5.300c.3 2.500 2.500 3.500 4.500 3.500 1.800 0 3.200-.5 4.500-1.200v3c-1.500.8-3.300 1.200-5.300 1.200-4.500 0-7-2.700-7-6 0-2.600 1.500-4.700 4-5.800C3.800 4.600 2.300 5.500 1 7zm4.500 0h5.700C11.200 5 10.200 4 8.500 4 6.800 4 5.800 5.300 5.500 7z" fill="#0a78d7" fillRule="evenodd" /></svg>
    </button>
    <button aria-label="视频" className="ml-[6px] flex w-[29px] items-center justify-center border-b-2 border-[#86c6c8]">
      <svg viewBox="0 0 17 17" className="size-[17px]" fill="#fff"><path d="M0 7h17v10H0zM0 2l3-.3 2 3-4 .5zM5 1.500l3-.3 2 3-3 .3zM10 1l3-.3 1.500 3-2.500.3zM15 .5l1.500-.2.500 3-1 .2z" /></svg>
    </button>
    <button aria-label="AutoCAD" className="ml-1 flex w-[35px] items-center justify-center border-b-2 border-[#86c6c8] bg-[#364449]">
      <svg viewBox="0 0 17 17" className="size-[17px]"><path d="M1 2h15v14H1z" fill="#7b7b7b" /><path d="m10 8 6-2v10H4z" fill="#d9d9d9" /><path d="m9 12 7-2v6H8z" fill="#5c5c5c" /><path d="M3 13 6 0h3l4 10-3 1-2-1-2 2z" fill="#e3202a" /></svg>
    </button>
    <button aria-label="画图" className="ml-1 flex w-[29px] items-center justify-center border-b-2 border-[#86c6c8]">
      <svg viewBox="0 0 18 18" className="size-[18px]"><path d="M8 4c5-1 9 1 8 5-1 3-4 1-5 3s-1 4-4 4c-4 0-6-3-6-6 0-3 3-5 7-6z" fill="#b9dcec" /><circle cx="4.500" cy="9" r="1.500" fill="#e7473c" /><circle cx="8" cy="6.500" r="1.400" fill="#57b04b" /><circle cx="6" cy="13" r="1.500" fill="#2f80d0" /><circle cx="12.500" cy="7.500" r="1.400" fill="#f2c230" /><path d="M16 1 12 17" stroke="#c98242" strokeWidth="2" /></svg>
    </button>
  </footer>
);

const Watermark = () => (
  <div className="pointer-events-none fixed right-0 bottom-0 flex items-end">
    <div className="w-8 pb-[17px] font-['Liberation_Sans',sans-serif] whitespace-nowrap text-white/85">
      <p className="text-[43px] leading-10 font-bold">Ba</p>
      <p className="text-[20px] leading-6">jing</p>
    </div>
    <div className="relative flex h-[95px] w-[200px] items-center bg-[#213055] text-[#d3d3d3]">
      <svg viewBox="0 0 32 12" className="absolute -top-3 left-10 h-3 w-8" fill="#f4f4f4" stroke="#ccc" strokeWidth=".5">
        <ellipse cx="8" cy="9" rx="6.500" ry="8" />
        <ellipse cx="24" cy="10" rx="6.500" ry="8" />
      </svg>
      <svg viewBox="510 100 140 185" className="ml-[10px] h-[62px] w-[47px] shrink-0" fill="none" stroke="currentColor" strokeLinecap="round">
        <path
          d="M525 126c7 3 11 8 15 8 8 1 12 5 16 11l15 6c-2 5-8 5-16 7-3 9 3 27 10 35 12 11 35 7 51 13 13 4 16 13 12 20-3 6-3 9 1 17 3 8 3 18 4 36h-12c0-6-6-1-6-4 7-5 6-12 3-20-9-6-14-13-21-18-14 2-29-2-44 4-3 10-3 22-4 38h-14c0-5 5-5 6-9l-1-33c-14-15-23-27-22-42 2-16 13-25 14-42-4-4-6-10-7-17z"
          fill="currentColor"
          stroke="none"
        />
        <path d="M551 135c4-4 12-9 25-6 12 9 27 12 37 5 10-8 20-14 31-19M556 131c-4-7-1-11 2-16M565 127c-2-6 0-10 4-14M578 129c6-5 10-10 10-19M592 136c11-2 17-6 20-11M580 122l-8-8M624 126l4-9M607 136l8 1M602 126l-7-3" strokeWidth="4" />
      </svg>
      <div className="ml-[7px] whitespace-nowrap">
        <p className="flex items-center text-[27px] leading-[38px] font-bold">
          <span className="mr-[2px] font-['Roboto'] text-[35px] font-medium">3D</span>溜溜网
        </p>
        <p className="font-['Inter'] text-[24px] leading-[22px] font-normal">3D66.COM</p>
      </div>
    </div>
  </div>
);

const App: React.FC = () => (
  <div className="flex h-screen flex-col overflow-hidden bg-[#666] font-['Noto_Sans','Noto_Sans_CJK_SC',sans-serif]">
    <Header />
    <div className="flex shrink-0 flex-col gap-[2px]">
      <StandardToolbar />
      <PropertiesToolbar />
    </div>
    <main className="flex min-h-0 flex-1 pt-px pb-[2px]">
      <DrawToolbar />
      <DrawingWindow />
      <ModifyToolbar />
    </main>
    <CommandLine />
    <StatusBar />
    <TaskBar />
    <Watermark />
  </div>
);

export default App;
